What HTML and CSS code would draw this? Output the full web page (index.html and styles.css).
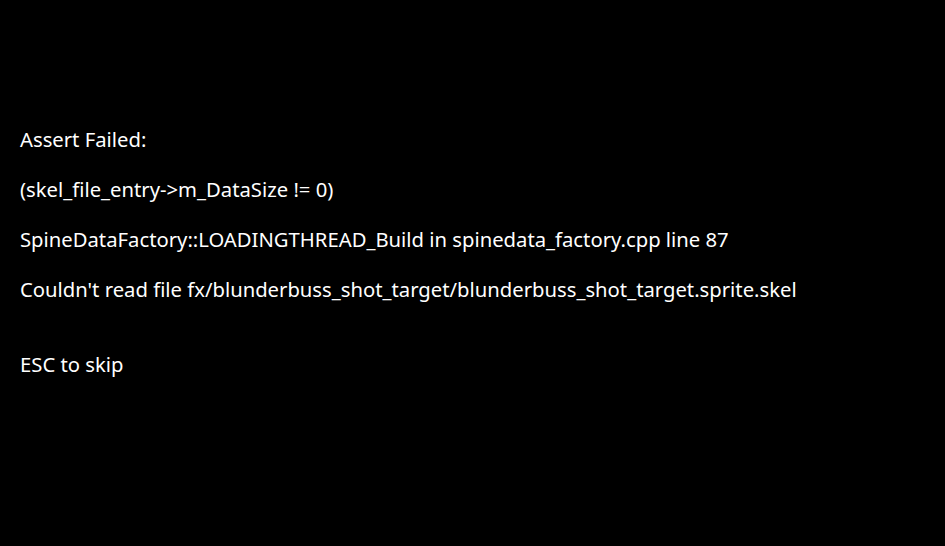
FILE: index.html
```html
<!DOCTYPE html>
<html>
<head>
<meta charset="utf-8">
<link rel="stylesheet" href="styles.css">
</head>
<body>
<main class="screen">
  <p class="line">Assert Failed:</p>
  <p class="line">(skel_file_entry-&gt;m_DataSize != 0)</p>
  <p class="line">SpineDataFactory::LOADINGTHREAD_Build in spinedata_factory.cpp line 87</p>
  <p class="line">Couldn't read file fx/blunderbuss_shot_target/blunderbuss_shot_target.sprite.skel</p>
  <p class="line skip">ESC to skip</p>
</main>
</body>
</html>
```

FILE: styles.css
```css
html, body {
  margin: 0;
  padding: 0;
  background: #000;
  height: 100%;
}
.screen {
  box-sizing: border-box;
  height: 100%;
  padding: 114px 0 0 20px;
  display: flex;
  flex-direction: column;
  color: #fff;
  font-family: "Noto Sans", "DejaVu Sans", sans-serif;
  font-size: 20.25px;
}
.line {
  margin: 0;
  line-height: 50px;
  white-space: nowrap;
}
.skip {
  margin-top: 25px;
}
```
